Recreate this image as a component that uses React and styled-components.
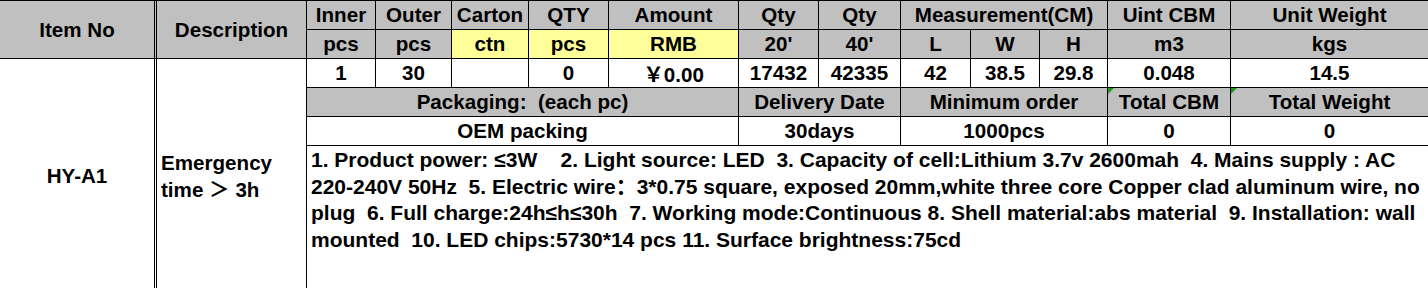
import React from 'react'
import styled, { createGlobalStyle } from 'styled-components'

const palette = {
  gray: '#c0c0c0',
  yellow: '#ffff99',
  white: '#ffffff',
  line: '#000000',
  flag: '#1e9a1e',
}

const GlobalStyle = createGlobalStyle`
  html, body {
    margin: 0;
    padding: 0;
    background: #fff;
    overflow: hidden;
  }
  body {
    font-family: 'Liberation Sans', Arial, 'Noto Sans CJK SC', sans-serif;
  }
`

const Sheet = styled.div`
  display: grid;
  grid-template-columns: 157px 150px 69px 76px 77px 80px 130px 80px 82px 70px 69px 68px 123px 197px;
  grid-template-rows: repeat(5, 29px) 148px;
  width: 1428px;
  border-top: 1px solid ${palette.line};
  font-size: 20.6px;
  font-weight: bold;
  color: #000;
`

const Cell = styled.div`
  grid-column: ${p => p.$col};
  grid-row: ${p => p.$row || 'auto'};
  position: relative;
  box-sizing: border-box;
  display: flex;
  align-items: center;
  justify-content: center;
  white-space: pre;
  background: ${p => palette[p.$tone || 'white']};
  border-bottom: 1px solid ${palette.line};
  border-right: ${p =>
    p.$edge === 'double'
      ? `3px double ${palette.line}`
      : p.$edge === 'none'
      ? 'none'
      : `1px solid ${palette.line}`};
`

const NoteCell = styled(Cell)`
  justify-content: flex-start;
  padding-left: 4px;
  white-space: normal;
  line-height: 27px;
`

const SpecCell = styled(Cell)`
  flex-direction: column;
  align-items: flex-start;
  justify-content: flex-start;
  padding: 1px 4px 0;
  font-size: 21px;
  line-height: 26.6px;
`

const SpecLine = styled.span`
  display: block;
  white-space: pre;
`

// small green triangle Excel draws in a cell corner
const Flag = styled.span`
  position: absolute;
  top: 0;
  left: 0;
  width: 0;
  height: 0;
  border-top: 6px solid ${palette.flag};
  border-right: 6px solid transparent;
`

const headTop = [
  { col: 3, text: 'Inner' },
  { col: 4, text: 'Outer' },
  { col: 5, text: 'Carton' },
  { col: 6, text: 'QTY' },
  { col: 7, text: 'Amount' },
  { col: 8, text: 'Qty' },
  { col: 9, text: 'Qty' },
  { col: '10 / 13', text: 'Measurement(CM)' },
  { col: 13, text: 'Uint CBM' },
  { col: 14, text: 'Unit Weight', edge: 'none' },
]

const headSub = [
  { col: 3, text: 'pcs' },
  { col: 4, text: 'pcs' },
  { col: 5, text: 'ctn', tone: 'yellow' },
  { col: 6, text: 'pcs', tone: 'yellow' },
  { col: 7, text: 'RMB', tone: 'yellow' },
  { col: 8, text: "20'" },
  { col: 9, text: "40'" },
  { col: 10, text: 'L' },
  { col: 11, text: 'W' },
  { col: 12, text: 'H' },
  { col: 13, text: 'm3' },
  { col: 14, text: 'kgs', edge: 'none' },
]

const values = ['1', '30', '', '0', '￥0.00', '17432', '42335', '42', '38.5', '29.8', '0.048', '14.5']

const summaryHead = [
  { col: '3 / 8', text: 'Packaging:  (each pc)' },
  { col: '8 / 10', text: 'Delivery Date' },
  { col: '10 / 13', text: 'Minimum order' },
  { col: 13, text: 'Total CBM', flag: true },
  { col: 14, text: 'Total Weight', flag: true, edge: 'none' },
]

const summaryValues = [
  { col: '3 / 8', text: 'OEM packing' },
  { col: '8 / 10', text: '30days' },
  { col: '10 / 13', text: '1000pcs' },
  { col: 13, text: '0' },
  { col: 14, text: '0', edge: 'none' },
]

const specLines = [
  '1. Product power: ≤3W    2. Light source: LED  3. Capacity of cell:Lithium 3.7v 2600mah  4. Mains supply : AC',
  '220-240V 50Hz  5. Electric wire：3*0.75 square, exposed 20mm,white three core Copper clad aluminum wire, no',
  'plug  6. Full charge:24h≤h≤30h  7. Working mode:Continuous 8. Shell material:abs material  9. Installation: wall',
  'mounted  10. LED chips:5730*14 pcs 11. Surface brightness:75cd',
]

const App = () => {
  return (
    <>
      <GlobalStyle />
      <Sheet>
        <Cell $col={1} $row="1 / 3" $tone="gray" $edge="double">Item No</Cell>
        <Cell $col={2} $row="1 / 3" $tone="gray">Description</Cell>

        {headTop.map(h => (
          <Cell key={'t' + h.col} $col={h.col} $row={1} $tone="gray" $edge={h.edge}>
            {h.text}
          </Cell>
        ))}
        {headSub.map(h => (
          <Cell key={'s' + h.col} $col={h.col} $row={2} $tone={h.tone || 'gray'} $edge={h.edge}>
            {h.text}
          </Cell>
        ))}

        <Cell $col={1} $row="3 / 7" $edge="double">HY-A1</Cell>
        <NoteCell $col={2} $row="3 / 7">Emergency time ＞ 3h</NoteCell>

        {values.map((v, i) => (
          <Cell key={'v' + i} $col={i + 3} $row={3} $edge={i === values.length - 1 ? 'none' : undefined}>
            {v}
          </Cell>
        ))}

        {summaryHead.map(s => (
          <Cell key={'h' + s.col} $col={s.col} $row={4} $tone="gray" $edge={s.edge}>
            {s.flag && <Flag />}
            {s.text}
          </Cell>
        ))}
        {summaryValues.map(s => (
          <Cell key={'d' + s.col} $col={s.col} $row={5} $edge={s.edge}>
            {s.text}
          </Cell>
        ))}

        <SpecCell $col="3 / 15" $row={6} $edge="none">
          {specLines.map((line, i) => (
            <SpecLine key={i}>{line}</SpecLine>
          ))}
        </SpecCell>
      </Sheet>
    </>
  )
}

export default App
